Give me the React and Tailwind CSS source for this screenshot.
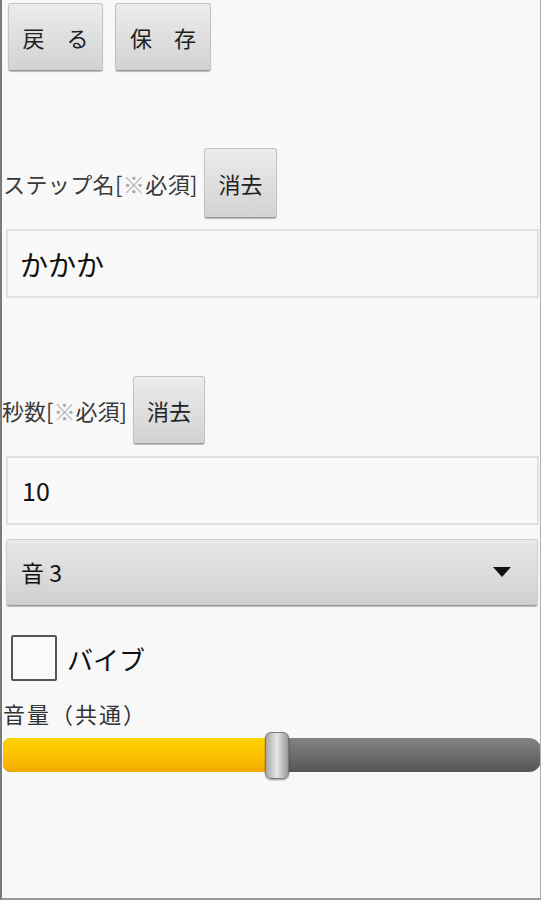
import React from "react";

const font = { fontFamily: '"Noto Sans CJK JP", "Noto Sans", sans-serif' };

function Btn({ children, className = "" }) {
  return (
    <div
      className={
        "flex items-center justify-center rounded-[3px] border border-[#c4c4c4] border-b-[#9a9a9a] bg-gradient-to-b from-[#ececec] to-[#d2d2d2] shadow-[0_1px_1px_rgba(0,0,0,0.25)] text-[#222] text-[22px] " +
        className
      }
    >
      {children}
    </div>
  );
}

export default function App() {
  return (
    <div
      style={font}
      className="w-[541px] h-[900px] bg-[#f8f8f8] border-l-2 border-l-[#7a7a7a] border-r border-r-[#b0b0b0] border-b-2 border-b-[#9a9a9a] flex flex-col overflow-hidden"
    >
      {/* top buttons */}
      <div className="flex gap-[12px] pl-[6px] pt-[3px]">
        <Btn className="w-[95px] h-[68px]">戻　る</Btn>
        <Btn className="w-[96px] h-[68px]">保　存</Btn>
      </div>

      {/* step name label */}
      <div className="flex items-center mt-[77px] pl-[1px]">
        <span className="text-[22px] text-[#3a3a3a] tracking-[0.4px] leading-none">
          ステップ名[<span className="text-[#aaa]">※</span>必須]
        </span>
        <Btn className="ml-[6px] w-[73px] h-[70px]">消去</Btn>
      </div>

      <div className="mt-[11px] ml-[4px] w-[533px] h-[69px] border-2 border-[#e0e0e0] bg-[#f9f9f9] flex items-center pl-[12px] text-[28px] text-[#111]">
        かかか
      </div>

      {/* seconds label */}
      <div className="flex items-center mt-[78px]">
        <span className="text-[22px] text-[#3a3a3a] tracking-[0px] leading-none">
          秒数[<span className="text-[#aaa]">※</span>必須]
        </span>
        <Btn className="ml-[6px] w-[72px] h-[68px]">消去</Btn>
      </div>

      <div className="mt-[12px] ml-[4px] w-[533px] h-[69px] border-2 border-[#e0e0e0] bg-[#f9f9f9] flex items-center pl-[14px] text-[25px] text-[#111]">
        10
      </div>

      {/* spinner */}
      <div className="mt-[14px] ml-[4px] w-[532px] h-[67px] rounded-[3px] border border-[#cfcfcf] border-b-[#9a9a9a] bg-gradient-to-b from-[#e8e8e8] to-[#d0d0d0] shadow-[0_1px_1px_rgba(0,0,0,0.25)] flex items-center justify-between pl-[14px] pr-[26px]">
        <span className="text-[23px] text-[#111]">音 3</span>
        <svg width="18" height="11" viewBox="0 0 18 11">
          <polygon points="0,0 18,0 9,10" fill="#111" />
        </svg>
      </div>

      {/* checkbox */}
      <div className="flex items-center mt-[29px] ml-[9px]">
        <div className="w-[46px] h-[46px] border-2 border-[#555] rounded-[2px] bg-[#fafafa]" />
        <span className="ml-[10px] text-[26px] text-[#111]">バイブ</span>
      </div>

      <div className="mt-[21px] ml-[1px] text-[22px] text-[#333] leading-none tracking-[2px]">
        音量（共通）
      </div>

      {/* slider */}
      <div className="relative mt-[8px] h-[48px] w-[538px] ml-[1px]">
        <div className="absolute left-0 right-0 top-[6px] h-[34px] rounded-r-[12px] rounded-l-[8px] bg-gradient-to-b from-[#828382] via-[#6c6d6c] to-[#555655]" />
        <div className="absolute left-0 w-[268px] top-[6px] h-[34px] rounded-l-[8px] bg-gradient-to-b from-[#ffd400] via-[#fcc200] to-[#f2a900]" />
        <div className="absolute left-[262px] top-0 w-[24px] h-[47px] rounded-[6px] border border-[#777] bg-gradient-to-r from-[#a8a8a8] via-[#e6e6e6] to-[#9a9a9a] shadow-[0_1px_2px_rgba(0,0,0,0.4)]" />
      </div>
    </div>
  );
}
